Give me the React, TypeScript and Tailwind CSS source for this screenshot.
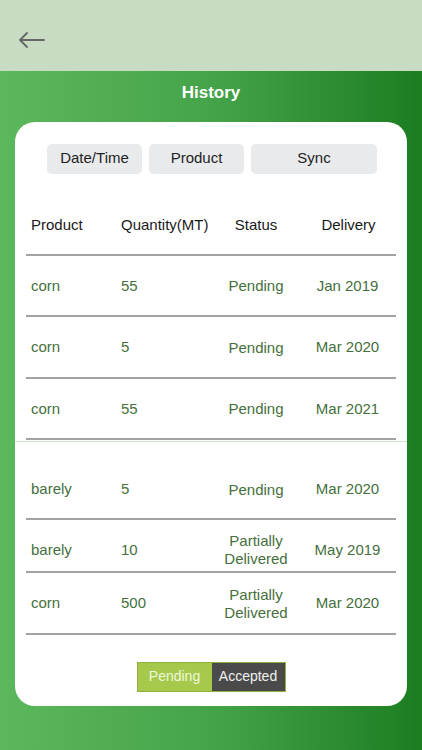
import React from "react";

const rows = [
  { product: "corn", qty: "55", status: ["Pending"], delivery: "Jan 2019", h: "h-[61px]" },
  { product: "corn", qty: "5", status: ["Pending"], delivery: "Mar 2020", h: "h-[62px]" },
  { product: "corn", qty: "55", status: ["Pending"], delivery: "Mar 2021", h: "h-[61px]" },
];

const rows2 = [
  { product: "barely", qty: "5", status: ["Pending"], delivery: "Mar 2020", h: "h-[78px] pt-[18px]" },
  { product: "barely", qty: "10", status: ["Partially", "Delivered"], delivery: "May 2019", h: "h-[53px] pt-[8px]" },
  { product: "corn", qty: "500", status: ["Partially", "Delivered"], delivery: "Mar 2020", h: "h-[62px]" },
];

type Row = (typeof rows)[number];

function TableRow({ r }: { r: Row }) {
  return (
    <div className={`grid grid-cols-[95px_90px_90px_1fr] items-center border-b-2 border-[#a3a3a3] text-[15px] text-[#456f3d] ${r.h}`}>
      <span className="pl-[5px] pt-[2px]">{r.product}</span>
      <span className="pt-[2px]">{r.qty}</span>
      <span className="pt-[2px] text-center leading-[18px]">
        {r.status.map((s) => (
          <span key={s} className="block">{s}</span>
        ))}
      </span>
      <span className="pt-[2px] pr-[2px] text-center">{r.delivery}</span>
    </div>
  );
}

export default function App() {
  return (
    <div className="flex h-[750px] w-[422px] flex-col font-['Liberation_Sans',Arial,sans-serif]">
      <div className="flex h-[71px] shrink-0 items-center bg-[#c8dcc3] pl-[18px] pt-[8px]">
        <svg width="28" height="16" viewBox="0 0 28 16" fill="none" stroke="#666" strokeWidth="1.8" strokeLinecap="round" strokeLinejoin="round">
          <path d="M26 8H2M9 1 2 8l7 7" />
        </svg>
      </div>
      <div className="flex flex-1 flex-col bg-gradient-to-r from-[#5cb85c] via-[#45a349] to-[#1a7d20] px-[15px]">
        <h1 className="pt-[9px] text-center text-[17px] font-bold text-white">History</h1>
        <div className="mt-[16px] rounded-[20px] bg-white px-[11px] pb-[14px] pt-[22px]">
          <div className="flex justify-center gap-[7px] pl-[2px] text-[15px] text-[#1f1f1f]">
            <button className="h-[30px] w-[95px] rounded-[5px] bg-[#e8eaec]">Date/Time</button>
            <button className="h-[30px] w-[95px] rounded-[5px] bg-[#e8eaec]">Product</button>
            <button className="h-[30px] w-[126px] rounded-[5px] bg-[#e8eaec]">Sync</button>
          </div>
          <div className="mt-[22px] grid h-[60px] grid-cols-[95px_90px_90px_1fr] items-center border-b-2 border-[#a3a3a3] pt-[2px] text-[15px] text-[#1a1a1a]">
            <span className="pl-[5px]">Product</span>
            <span>Quantity(MT)</span>
            <span className="text-center">Status</span>
            <span className="text-center">Delivery</span>
          </div>
          {rows.map((r, i) => (
            <TableRow key={i} r={r} />
          ))}
          <div className="-mx-[11px] mt-[1px] h-px bg-[#cfe5cb]" />
          {rows2.map((r, i) => (
            <TableRow key={i} r={r} />
          ))}
          <div className="mt-[27px] flex justify-center">
            <div className="flex h-[30px] border border-[#8fb040] text-[14px]">
              <span className="flex w-[74px] items-center justify-center bg-[#a6c94c] text-[#eef7dc]">Pending</span>
              <span className="flex w-[73px] items-center justify-center bg-[#4a4a4a] text-[#f0f0f0]">Accepted</span>
            </div>
          </div>
        </div>
      </div>
    </div>
  );
}
